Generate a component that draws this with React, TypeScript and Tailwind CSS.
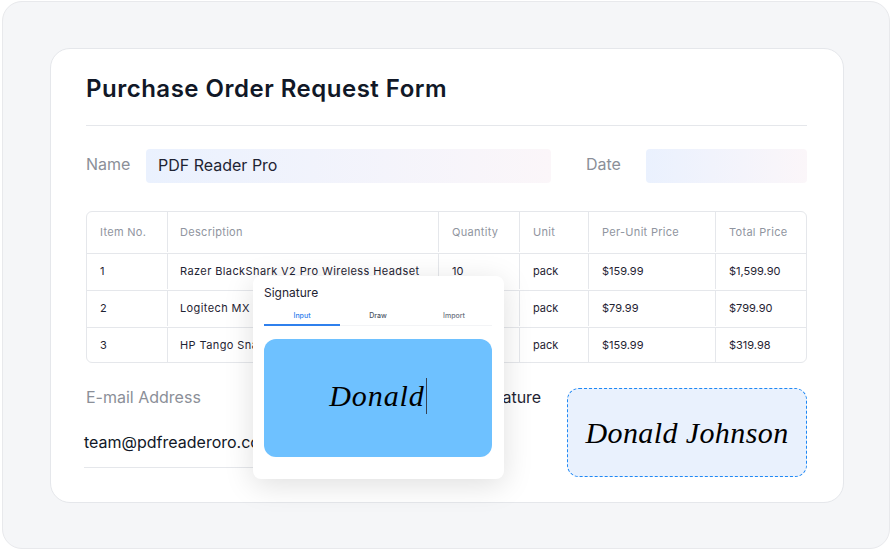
const rows = [
  { no: "1", desc: "Razer BlackShark V2 Pro Wireless Headset", qty: "10", unit: "pack", price: "$159.99", total: "$1,599.90", h: "h-[37px] pb-px" },
  { no: "2", desc: "Logitech MX Master 3S Wireless Mouse", qty: "10", unit: "pack", price: "$79.99", total: "$799.90", h: "h-[37px] pb-px" },
  { no: "3", desc: "HP Tango Snap All-in-One Printer", qty: "2", unit: "pack", price: "$159.99", total: "$319.98", h: "h-[35px]" },
];

const cols = "grid grid-cols-[80px_271px_81px_69px_127px_1fr]";
const headers = ["Item No.", "Description", "Quantity", "Unit", "Per-Unit Price", "Total Price"];

function SignatureDialog() {
  return (
    <div className="absolute left-[202px] top-[227px] h-[203px] w-[251px] rounded-lg bg-white pl-[11px] pr-[12px] shadow-[0_6px_30px_rgba(0,0,0,0.13)]">
      <p className="mt-[9px] text-[12px] leading-[15px] text-[#1f2433]">Signature</p>
      <div className="mt-[11px] grid grid-cols-3 border-b border-[#f3f4f6] text-center text-[7px] font-medium leading-[9px]">
        <span className="-mb-px border-b-2 border-[#2f80ed] pb-[4px] text-[#2f80ed]">Input</span>
        <span className="pb-[4px] text-[#4b5563]">Draw</span>
        <span className="pb-[4px] text-[#6b7280]">Import</span>
      </div>
      <div className="mt-[13px] flex h-[118px] items-center justify-center rounded-xl bg-[#6ec1ff] pb-[4px]">
        <span className="font-['Liberation_Serif',serif] text-[30px] italic leading-none tracking-[0.9px] text-black">Donald</span>
        <span className="ml-[1px] h-[36px] w-px bg-[#374151]" />
      </div>
    </div>
  );
}

export default function App() {
  return (
    <div className="h-[550px] w-[890px] overflow-hidden bg-white pl-[2px] pt-px font-['Inter',sans-serif]">
      <div className="h-[548px] w-[888px] rounded-[20px] border border-[#e8e9ec] bg-[#f5f6f8] pl-[47px] pt-[46px]">
        <div className="relative h-[455px] w-[794px] rounded-[20px] border border-[#e5e7eb] bg-white px-[35px]">
          <h1 className="mt-[25px] text-[24px] font-semibold leading-[30px] tracking-[0.5px] text-[#111827]">
            Purchase Order Request Form
          </h1>
          <div className="mt-[21px] h-px w-[721px] bg-[#e5e7eb]" />

          <div className="mt-[23px] flex h-[34px] w-[721px] items-center text-[16px] text-[#8b8f98]">
            <span className="w-[60px] pb-[4px]">Name</span>
            <div className="flex h-full w-[405px] items-center rounded bg-gradient-to-r from-[#eaf1fe] to-[#fbf6f9] pb-[2px] pl-[12px] text-[#1f2433]">
              PDF Reader Pro
            </div>
            <span className="ml-[35px] w-[60px] pb-[4px]">Date</span>
            <div className="h-full w-[161px] rounded bg-gradient-to-r from-[#eaf1fe] to-[#fbf6f9]" />
          </div>

          <div className="mt-[28px] w-[721px] rounded-md border border-[#e5e7eb] text-[11px] text-[#1f2433]">
            <div className={`${cols} h-[41px] items-stretch pb-px text-[#9095a0]`}>
              {headers.map((h, i) => (
                <div key={h} className={`flex items-center tracking-[0.3px] ${i === 1 ? "pl-[12px]" : "pl-[13px]"} ${i > 0 ? "border-l border-[#e5e7eb]" : ""}`}>
                  {h}
                </div>
              ))}
            </div>
            {rows.map((r) => (
              <div key={r.no} className={`${cols} ${r.h} border-t border-[#e5e7eb]`}>
                <div className="flex items-center pl-[13px]">{r.no}</div>
                <div className="flex items-center whitespace-nowrap border-l border-[#e5e7eb] pl-[12px] tracking-[0.4px]">{r.desc}</div>
                <div className="flex items-center border-l border-[#e5e7eb] pl-[13px]">{r.qty}</div>
                <div className="flex items-center border-l border-[#e5e7eb] pl-[13px]">{r.unit}</div>
                <div className="flex items-center border-l border-[#e5e7eb] pl-[13px]">{r.price}</div>
                <div className="flex items-center border-l border-[#e5e7eb] pl-[13px]">{r.total}</div>
              </div>
            ))}
          </div>

          <div className="mt-[24px] flex w-[721px] items-start">
            <div className="w-[200px] shrink-0">
              <p className="text-[16px] leading-[20px] text-[#8b8f98]">E-mail Address</p>
              <div className="-ml-[2px] mt-[23px] h-[38px] whitespace-nowrap border-b border-[#e5e7eb] text-[16px] leading-[24px] text-[#111827]">
                team@pdfreaderoro.com
              </div>
            </div>
            <p className="ml-[183px] text-[16px] leading-[20px] text-[#1f2433]">Signature</p>
            <div className="ml-auto mt-px flex h-[89px] w-[240px] items-center justify-center rounded-xl border border-dashed border-[#1e88f5] bg-[#e9f1fd]">
              <span className="font-['Liberation_Serif',serif] text-[30px] italic leading-none tracking-[0.4px] text-black">Donald Johnson</span>
            </div>
          </div>

          <SignatureDialog />
        </div>
      </div>
    </div>
  );
}
